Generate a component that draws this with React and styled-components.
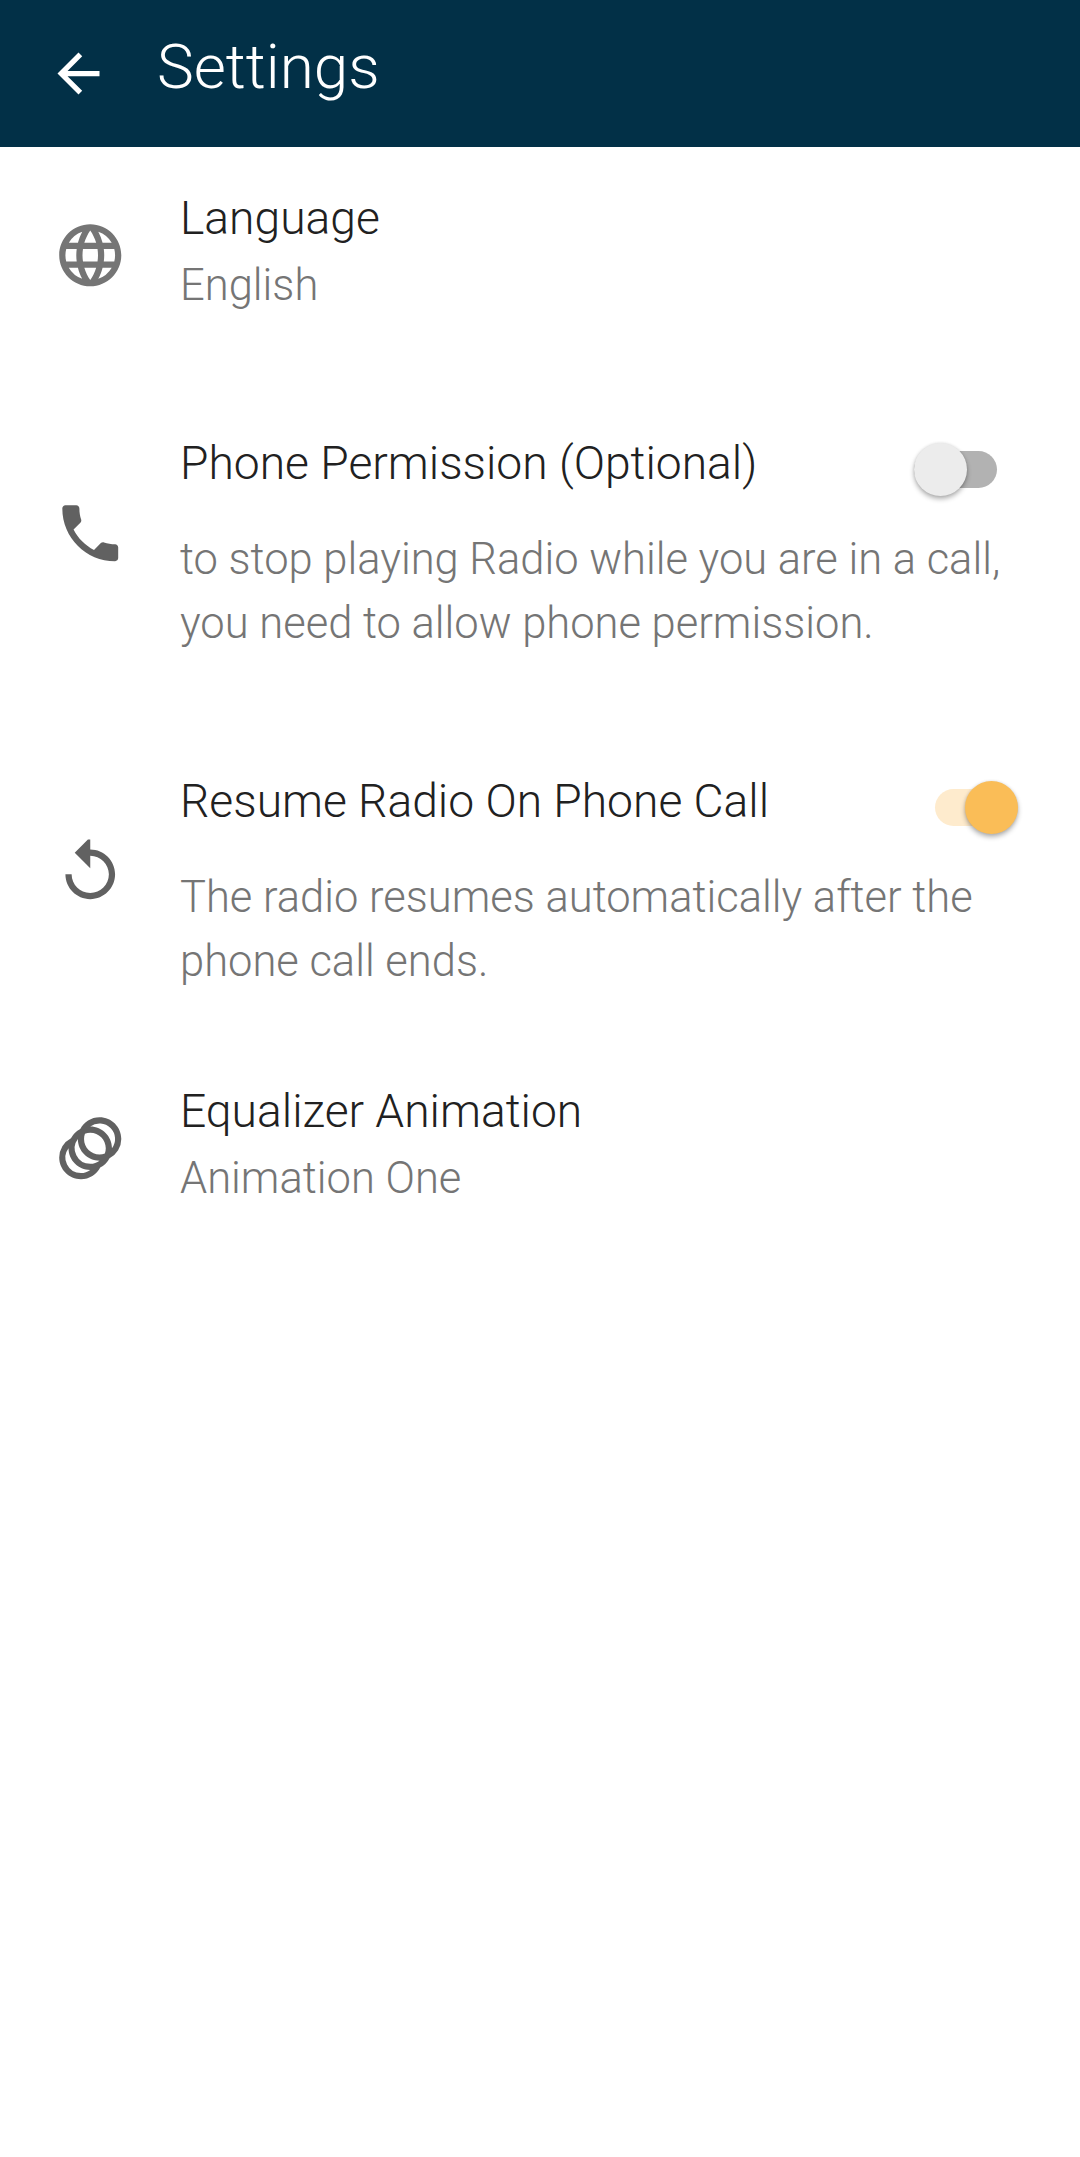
import React, { useState } from 'react';
import styled, { createGlobalStyle } from 'styled-components';
import { MdAnimation, MdArrowBack, MdLanguage, MdPhone } from 'react-icons/md';

const GlobalStyle = createGlobalStyle`
  body {
    margin: 0;
    background: #fff;
    font-family: Roboto, sans-serif;
    font-weight: 300;
  }
`;

const Screen = styled.div`
  min-height: 2157px;
  background: #fff;
`;

const Header = styled.header`
  display: flex;
  align-items: flex-start;
  box-sizing: border-box;
  height: 147px;
  padding: 29px 53px 0 47px;
  gap: 47px;
  background: #023047;
  color: #fff;
`;

const BackButton = styled.button`
  display: flex;
  margin: 13px 0 0;
  padding: 0;
  border: none;
  background: none;
  color: inherit;
  font-size: 63px;
  cursor: pointer;
`;

const Title = styled.h1`
  margin: 0;
  font-size: 62px;
  line-height: 75px;
  font-weight: 300;
`;

const Row = styled.section`
  display: grid;
  grid-template-columns: 75px 1fr;
  column-gap: 52px;
  align-items: start;
  box-sizing: border-box;
  height: ${({ $height }) => $height}px;
  padding: 43px 60px 0 53px;
`;

const RowIcon = styled.div`
  display: flex;
  margin-top: ${({ $offset }) => $offset}px;
  font-size: 74.5px;
  color: ${({ $color }) => $color || '#616161'};
`;

const TitleLine = styled.div`
  display: flex;
  justify-content: space-between;
  height: 56px;
  padding-right: ${({ $inset }) => $inset || 0}px;
`;

const Name = styled.h2`
  margin: 0;
  font-size: 46.2px;
  line-height: 56px;
  font-weight: 300;
  color: #212121;
`;

const Summary = styled.p`
  margin: ${({ $gap }) => $gap}px 0 0;
  font-size: 43.5px;
  line-height: 64px;
  white-space: nowrap;
  color: #757575;
`;

const Track = styled.button`
  display: flex;
  align-items: center;
  justify-content: ${({ $on }) => ($on ? 'flex-end' : 'flex-start')};
  width: 83px;
  height: 37px;
  margin: 16px 0 0;
  padding: 0;
  border: none;
  border-radius: 19px;
  background: ${({ $on }) => ($on ? '#feebcd' : '#b2b2b2')};
  cursor: pointer;
`;

const Thumb = styled.span`
  flex: none;
  width: 53px;
  height: 53px;
  border-radius: 50%;
  background: ${({ $on }) => ($on ? '#fabd57' : '#ececec')};
  box-shadow: 0 3px 5px rgba(0, 0, 0, 0.3), 0 0 3px rgba(0, 0, 0, 0.1);
`;

const Switch = ({ on, onToggle }) => (
  <Track type="button" role="switch" aria-checked={on} $on={on} onClick={onToggle}>
    <Thumb $on={on} />
  </Track>
);

const ReplayIcon = () => (
  <svg viewBox="0 0 24 24" width="1em" height="1em" fill="currentColor">
    <path d="M12 5V1.75h-.75L7 6l5 5V7c3.31 0 6 2.69 6 6s-2.69 6-6 6-6-2.69-6-6H4c0 4.42 3.58 8 8 8s8-3.58 8-8-3.58-8-8-8z" />
  </svg>
);

const App = () => {
  const [phonePermission, setPhonePermission] = useState(false);
  const [resumeRadio, setResumeRadio] = useState(true);

  return (
    <Screen>
      <GlobalStyle />
      <Header>
        <BackButton type="button">
          <MdArrowBack />
        </BackButton>
        <Title>Settings</Title>
      </Header>

      <Row $height={245}>
        <RowIcon $offset={27.5} $color="#757575">
          <MdLanguage />
        </RowIcon>
        <div>
          <Name>Language</Name>
          <Summary $gap={8}>English</Summary>
        </div>
      </Row>

      <Row $height={338}>
        <RowIcon $offset={60.5}>
          <MdPhone />
        </RowIcon>
        <div>
          <TitleLine $inset={23}>
            <Name>Phone Permission (Optional)</Name>
            <Switch on={phonePermission} onToggle={() => setPhonePermission(!phonePermission)} />
          </TitleLine>
          <Summary $gap={37}>
            to stop playing Radio while you are in a call,
            <br />
            you need to allow phone permission.
          </Summary>
        </div>
      </Row>

      <Row $height={310}>
        <RowIcon $offset={60.5}>
          <ReplayIcon />
        </RowIcon>
        <div>
          <TitleLine $inset={2}>
            <Name>Resume Radio On Phone Call</Name>
            <Switch on={resumeRadio} onToggle={() => setResumeRadio(!resumeRadio)} />
          </TitleLine>
          <Summary $gap={37}>
            The radio resumes automatically after the
            <br />
            phone call ends.
          </Summary>
        </div>
      </Row>

      <Row $height={245}>
        <RowIcon $offset={27.5}>
          <MdAnimation />
        </RowIcon>
        <div>
          <Name>Equalizer Animation</Name>
          <Summary $gap={8}>Animation One</Summary>
        </div>
      </Row>
    </Screen>
  );
};

export default App;
